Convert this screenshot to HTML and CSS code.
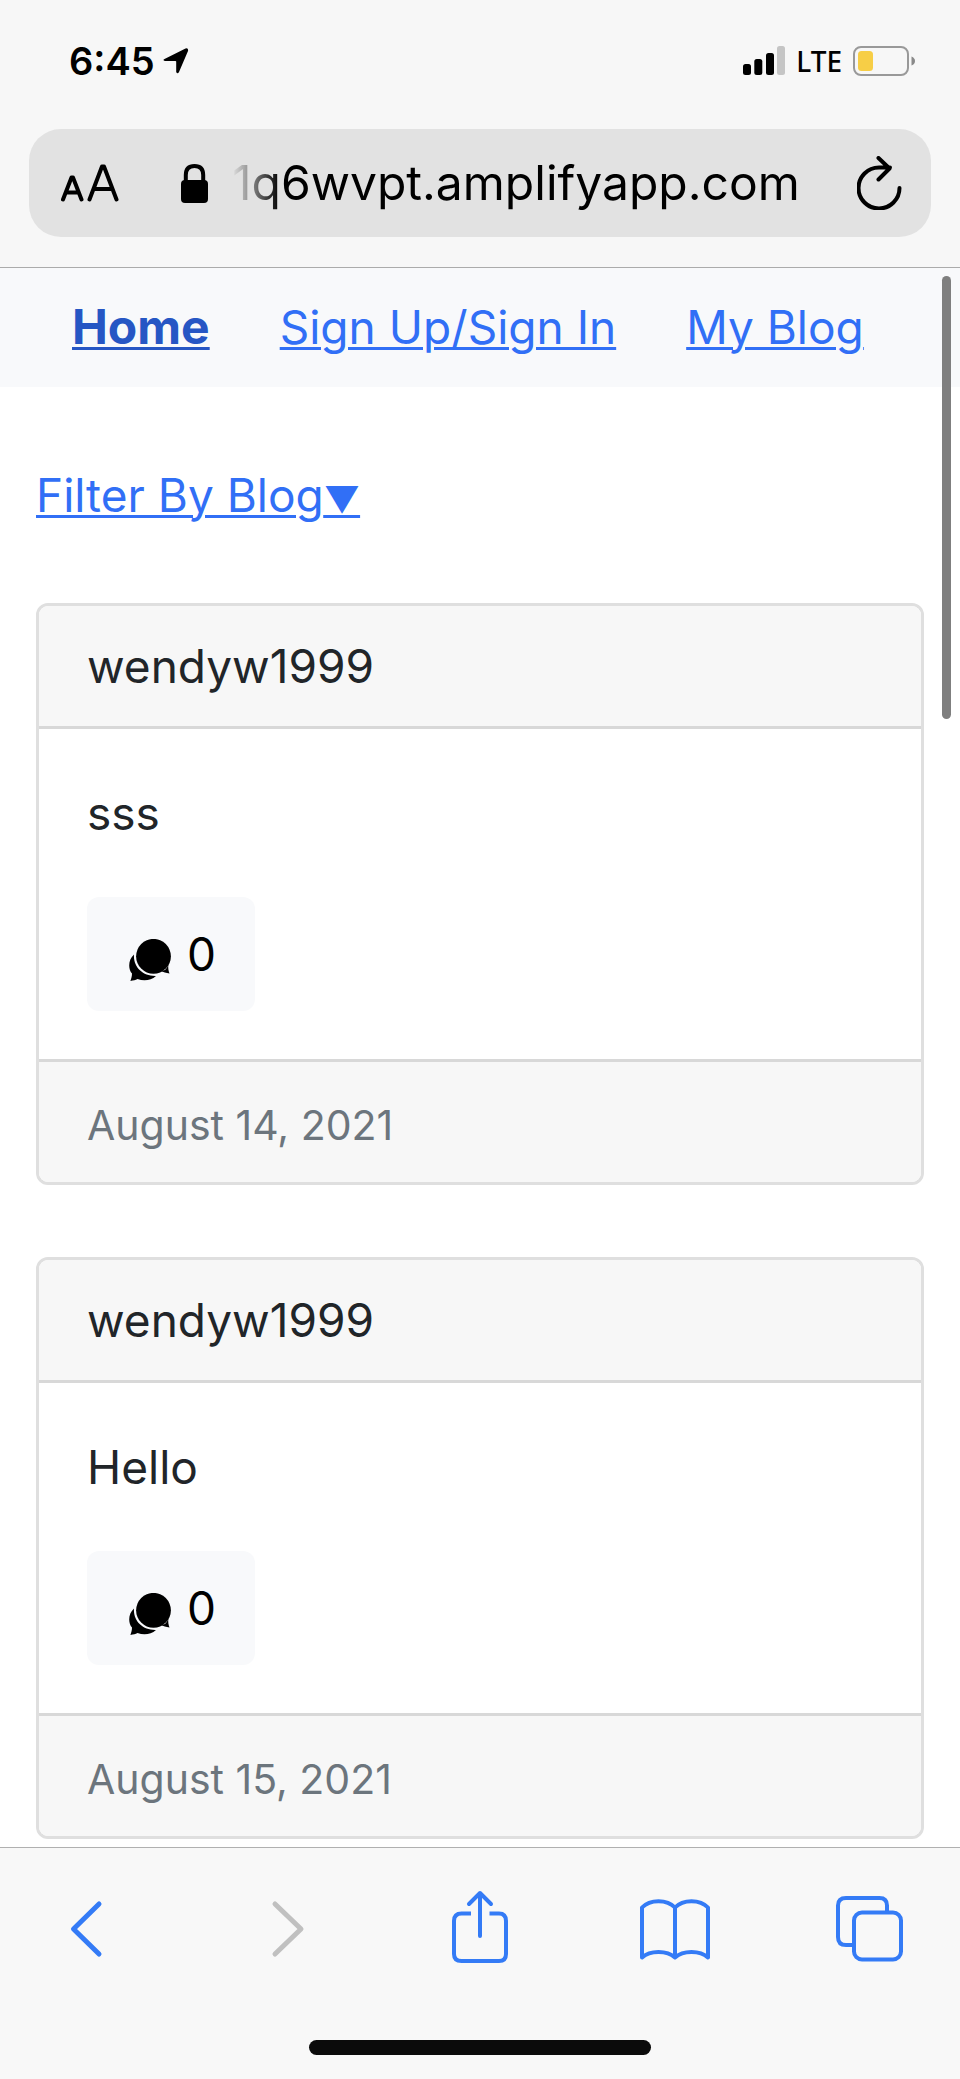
FILE: index.html
```html
<!DOCTYPE html>
<html lang="en">
<head>
<meta charset="utf-8">
<meta name="viewport" content="width=device-width, initial-scale=1">
<title>Blog</title>
<link rel="stylesheet" href="styles.css">
</head>
<body class="screen">
<svg class="sprite" aria-hidden="true">
  <symbol id="chat" viewBox="0 0 42 42">
    <circle cx="24.500" cy="17.300" r="17.400"/>
    <path d="M36 31 C38 29 39 27 39.500 25 C38.800 29 39.500 32 40.500 34.500 C37 34 34.500 33 31.500 32 Z"/>
    <path d="M5 15.600 C-1 21 -1 30 3 34.500 C3 37.500 2 40 1.400 42 C4.500 41.500 6.500 41 8.500 40 C15 42.500 22 41.500 27 37 C14 37.500 4 28 5 15.600 Z"/>
  </symbol>
</svg>

<header class="browser-top">
  <div class="status">
    <div class="status-group">
      <span class="time">6:45</span>
      <svg class="location" viewBox="0 0 26 26" aria-hidden="true"><path d="M1.500 11 L22.500 .5 Q25.600 -.3 25 3 L16 24 Q14.500 26.500 13.200 24 V13.500 Q13 13 12.500 12.900 L2 12.900 Q-.8 12.300 1.500 11 Z"/></svg>
    </div>
    <div class="status-group status-right">
      <svg class="signal" viewBox="0 0 42 29" aria-hidden="true"><rect y="18" width="8" height="11" rx="2.500"/><rect x="11.300" y="13" width="8" height="16" rx="2.500"/><rect x="23" y="7" width="8" height="22" rx="2.500"/><rect class="dim" x="34" width="8" height="29" rx="2.500"/></svg>
      <span class="carrier">LTE</span>
      <svg class="battery" viewBox="0 0 62 30" aria-hidden="true"><rect class="shell" x="1" y="1" width="54" height="28" rx="7"/><rect class="charge" x="5" y="5" width="15" height="20" rx="3.500"/><path class="tip" d="M58.500 10.500 Q62 12 62 15 T58.500 19.500 Z"/></svg>
    </div>
  </div>
  <div class="address">
    <button class="address-btn" type="button" aria-label="Text size">
      <svg class="text-size" viewBox="0 0 58 38" aria-hidden="true"><path d="M2 35.500 L10.500 13.500 H12 L20.500 35.500 M5.500 28.500 H17 M28.500 35.500 L41 2.500 H43 L55.500 35.500 M32.500 25 H51"/></svg>
    </button>
    <svg class="lock" viewBox="0 0 27 39" aria-hidden="true"><rect y="16" width="27" height="23" rx="4"/><path d="M4.800 18 V11 Q4.800 2 13.500 2 T22.200 11 V18"/></svg>
    <input class="url" type="text" value="1q6wvpt.amplifyapp.com" aria-label="Address">
    <button class="address-btn" type="button" aria-label="Reload">
      <svg class="reload" viewBox="0 0 46 54" aria-hidden="true"><path d="M42.500 32 A20.500 20.500 0 1 1 22 11.500 H33 M21.500 2 L32.500 12.500 L21.500 23.500"/></svg>
    </button>
  </div>
</header>

<nav class="nav" aria-label="Main">
  <a class="link current" href="#">Home</a>
  <a class="link" href="#">Sign Up/Sign In</a>
  <a class="link" href="#">My Blog</a>
</nav>

<main class="content">
  <button class="link filter" type="button">Filter By Blog<span class="caret">▼</span></button>
  <article class="card">
    <div class="card-header">wendyw1999</div>
    <div class="card-body">
      <p class="card-text">sss</p>
      <button class="comments" type="button"><svg class="chat" aria-hidden="true"><use href="#chat"/></svg>0</button>
    </div>
    <div class="card-footer">August 14, 2021</div>
  </article>
  <article class="card">
    <div class="card-header">wendyw1999</div>
    <div class="card-body">
      <p class="card-text">Hello</p>
      <button class="comments" type="button"><svg class="chat" aria-hidden="true"><use href="#chat"/></svg>0</button>
    </div>
    <div class="card-footer">August 15, 2021</div>
  </article>
</main>
<div class="scroll-thumb"></div>

<footer class="browser-bottom">
  <div class="tools">
    <button class="tool" type="button" aria-label="Back"><svg viewBox="0 0 72 78" aria-hidden="true"><path class="thick" d="M47 14 L21.500 39 L47 64"/></svg></button>
    <button class="tool" type="button" aria-label="Forward" disabled><svg viewBox="0 0 72 78" aria-hidden="true"><path class="thick" d="M27 14 L53 39 L27 64"/></svg></button>
    <button class="tool" type="button" aria-label="Share"><svg viewBox="0 0 72 78" aria-hidden="true"><path class="flat" d="M27 23.500 H17.500 Q10 23.500 10 31 V64 Q10 71 17.500 71 H55 Q62 71 62 64 V31 Q62 23.500 55 23.500 H45.500"/><path d="M36 46 V3 M25 14 L36 3 L47 14"/></svg></button>
    <button class="tool" type="button" aria-label="Bookmarks"><svg viewBox="0 0 72 78" aria-hidden="true"><path d="M36 17.500 C28 9 11 9 3 17.500 V67.500 C11 60 28 60 36 67.500 C44 60 61 60 69 67.500 V17.500 C61 9 44 9 36 17.500 V67.500"/></svg></button>
    <button class="tool" type="button" aria-label="Tabs"><svg viewBox="0 0 72 78" aria-hidden="true"><path class="flat" d="M52 21 V15.500 Q52 8 44.500 8 H11 Q3 8 3 15.500 V47 Q3 55 11 55 H18"/><rect x="19" y="22.500" width="47" height="47" rx="8"/></svg></button>
  </div>
  <div class="home-indicator"></div>
</footer>
</body>
</html>
```
FILE: styles.css
```css
* { box-sizing: border-box; }

.screen {
  position: relative;
  margin: 0;
  min-height: 100vh;
  display: flex;
  flex-direction: column;
  background: #fff;
  color: #212529;
  font: 400 46px/72px Inter, "Liberation Sans", sans-serif;
}

button, input {
  border: 0;
  margin: 0;
  padding: 0;
  background: none;
  color: inherit;
  font: inherit;
}

.sprite { position: absolute; width: 0; height: 0; }

/* Browser chrome, top */
.browser-top {
  background: #f7f7f7;
  border-bottom: 1px solid #ababab;
  padding: 0 29px 30px;
  color: #000;
}
.status {
  height: 129px;
  padding: 0 16px 8px 40px;
  display: flex;
  align-items: center;
  justify-content: space-between;
}
.status-group { display: flex; align-items: center; gap: 8px; }
.status-right { gap: 11px; }
.time { font-size: 38px; font-weight: 600; }
.location { width: 26px; height: 26px; }
.signal { width: 42px; height: 29px; }
.dim { fill: #c5c5c5; }
.carrier { font-family: "Noto Sans", sans-serif; font-size: 28px; font-weight: 500; line-height: 36px; }
.battery { width: 62px; height: 30px; }
.shell { fill: none; stroke: #999; stroke-width: 2; }
.charge { fill: #f7ce46; }
.tip { fill: #8a8a8a; }

.address {
  height: 108px;
  border-radius: 32px;
  background: #e2e2e2;
  display: flex;
  align-items: center;
  padding: 0 28px 0 32px;
}
.address-btn { display: flex; flex: none; }
.text-size { width: 58px; height: 38px; fill: none; stroke: #000; stroke-width: 4; stroke-linecap: round; stroke-linejoin: round; }
.lock { flex: none; width: 27px; height: 39px; margin: 0 24px 0 62px; }
.lock path { fill: none; stroke: #000; stroke-width: 4; }
.url {
  flex: 1;
  min-width: 0;
  height: 72px;
  font-size: 48px;
  outline: 0;
  mask-image: linear-gradient(90deg, transparent, #000 48px);
}
.reload { width: 46px; height: 54px; fill: none; stroke: #000; stroke-width: 4; stroke-linecap: round; stroke-linejoin: round; }

/* Site navigation */
.nav {
  display: flex;
  gap: 70px;
  padding: 23px 72px 24px;
  background: #f8f9fb;
}
.link {
  color: #316ff6;
  text-decoration: underline;
  text-decoration-thickness: 3px;
  text-underline-offset: 3px;
  white-space: nowrap;
}
.current { color: #2656c4; font-size: 48px; font-weight: 700; }

/* Posts */
.content {
  flex: 1;
  display: flex;
  flex-direction: column;
  gap: 72px;
  padding: 72px 36px 8px;
}
.filter { align-self: flex-start; }
.caret { font-size: 36px; line-height: 1; }
.card {
  border: 3px solid #dfdfdf;
  border-radius: 12px;
  overflow: hidden;
}
.card-header, .card-footer { padding: 24px 48px; background: #f7f7f7; }
.card-header { border-bottom: 3px solid #d8d8d8; }
.card-footer { padding: 27px 48px 21px; border-top: 3px solid #d8d8d8; color: #6c757d; font-size: 41px; }
.card-body {
  display: flex;
  flex-direction: column;
  align-items: flex-start;
  gap: 48px;
  padding: 48px;
}
.card-text { margin: 0; }
.comments {
  display: flex;
  align-items: center;
  gap: 16px;
  padding: 21px 39px 21px 42px;
  border-radius: 12px;
  background: #f8f9fb;
  color: #000;
}
.chat { width: 42px; height: 42px; margin-top: 12px; }

.scroll-thumb {
  position: absolute;
  top: 276px;
  right: 9px;
  width: 9px;
  height: 443px;
  border-radius: 5px;
  background: #7f7f7f;
}

/* Browser chrome, bottom */
.browser-bottom {
  display: flex;
  flex-direction: column;
  align-items: center;
  justify-content: space-between;
  height: 232px;
  padding: 42px 53px 24px 52px;
  background: #f8f8f8;
  border-top: 1px solid #b0b0b0;
}
.tools { display: flex; justify-content: space-between; width: 100%; }
.tool { display: flex; color: #347bf6; }
.tool:disabled { color: #c0c0c0; }
.tool svg { width: 72px; height: 78px; fill: none; stroke: currentColor; stroke-width: 4; stroke-linecap: round; stroke-linejoin: round; }
.tool .thick { stroke-width: 5; }
.tool .flat { stroke-linecap: butt; }
.home-indicator { width: 342px; height: 15px; border-radius: 8px; background: #0b0b0b; }
```
